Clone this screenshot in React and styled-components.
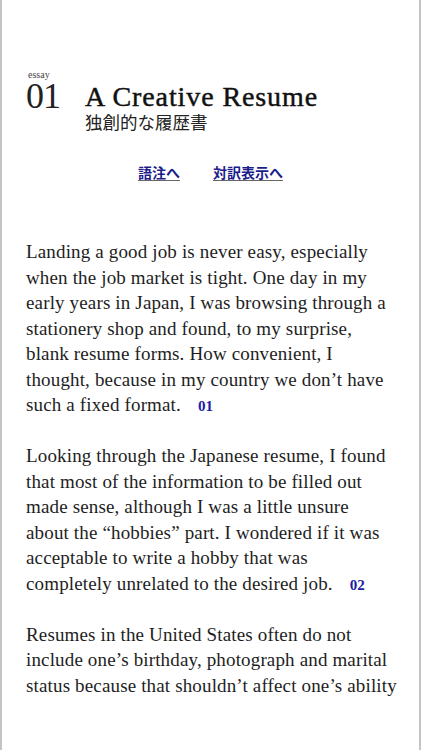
import React from "react";
import styled, { createGlobalStyle } from "styled-components";

const Global = createGlobalStyle`
  html, body { margin: 0; padding: 0; background: #fff; }
  body { font-family: "Liberation Serif", "Noto Sans CJK JP", serif; }
`;

const Page = styled.div`
  box-sizing: border-box;
  width: 421px;
  min-height: 750px;
  border-left: 2px solid #c4c4c4;
  border-right: 2px solid #c4c4c4;
  padding: 70px 0 0 24px;
  color: #1e1e1e;
`;

const Header = styled.header`
  display: flex;
  align-items: flex-start;
  gap: 22px;
`;

const Number = styled.div`
  display: flex;
  flex-direction: column;
  align-items: flex-start;
  width: 37px;
`;

const Label = styled.span`
  font-family: "Liberation Serif", serif;
  font-size: 10px;
  line-height: 10px;
  color: #444;
  margin-left: 2px;
`;

const Big = styled.span`
  font-family: "Liberation Serif", serif;
  font-size: 36px;
  line-height: 32px;
  letter-spacing: -1px;
  color: #222;
`;

const Titles = styled.div`
  display: flex;
  flex-direction: column;
  padding-top: 13px;
`;

const Title = styled.h1`
  margin: 0;
  font-family: "Liberation Serif", serif;
  font-weight: normal;
  font-size: 28px;
  line-height: 28px;
  letter-spacing: 0.9px;
  -webkit-text-stroke: 0.45px #111;
  color: #111;
`;

const Subtitle = styled.div`
  font-family: "Noto Sans CJK JP", sans-serif;
  font-size: 17.5px;
  line-height: 22px;
  color: #222;
`;

const Links = styled.nav`
  display: flex;
  gap: 33px;
  padding: 30px 0 0 112px;
`;

const NavLink = styled.a`
  font-family: "Noto Sans CJK JP", sans-serif;
  font-weight: bold;
  font-size: 14px;
  line-height: 18px;
  color: #1c1c8a;
  text-decoration: underline;
  text-decoration-color: #666;
  text-underline-offset: 2px;
`;

const Body = styled.div`
  padding: 58px 0 0 0;
`;

const Para = styled.p`
  margin: 0 0 25.5px;
  font-family: "Liberation Serif", serif;
  font-size: 19px;
  line-height: 25.5px;
  letter-spacing: 0.15px;
  white-space: nowrap;
  color: #1e1e1e;
`;

const Line = styled.span`
  display: block;
`;

const Note = styled.a`
  font-family: "Liberation Serif", serif;
  font-weight: bold;
  font-size: 15px;
  line-height: 1;
  letter-spacing: 0;
  color: #1c1ca5;
  text-decoration: none;
  margin-left: 17px;
`;

const paragraphs = [
  {
    lines: [
      "Landing a good job is never easy, especially",
      "when the job market is tight. One day in my",
      "early years in Japan, I was browsing through a",
      "stationery shop and found, to my surprise,",
      "blank resume forms. How convenient, I",
      "thought, because in my country we don’t have",
      "such a fixed format.",
    ],
    note: "01",
  },
  {
    lines: [
      "Looking through the Japanese resume, I found",
      "that most of the information to be filled out",
      "made sense, although I was a little unsure",
      "about the “hobbies” part. I wondered if it was",
      "acceptable to write a hobby that was",
      "completely unrelated to the desired job.",
    ],
    note: "02",
  },
  {
    lines: [
      "Resumes in the United States often do not",
      "include one’s birthday, photograph and marital",
      "status because that shouldn’t affect one’s ability",
    ],
  },
];

export default function App() {
  return (
    <>
      <Global />
      <Page>
        <Header>
          <Number>
            <Label>essay</Label>
            <Big>01</Big>
          </Number>
          <Titles>
            <Title>A Creative Resume</Title>
            <Subtitle>独創的な履歴書</Subtitle>
          </Titles>
        </Header>
        <Links>
          <NavLink href="#notes">語注へ</NavLink>
          <NavLink href="#translation">対訳表示へ</NavLink>
        </Links>
        <Body>
          {paragraphs.map((p, i) => (
            <Para key={i}>
              {p.lines.map((l, j) => (
                <Line key={j}>
                  {l}
                  {p.note && j === p.lines.length - 1 && (
                    <Note href={`#n${p.note}`}>{p.note}</Note>
                  )}
                </Line>
              ))}
            </Para>
          ))}
        </Body>
      </Page>
    </>
  );
}
